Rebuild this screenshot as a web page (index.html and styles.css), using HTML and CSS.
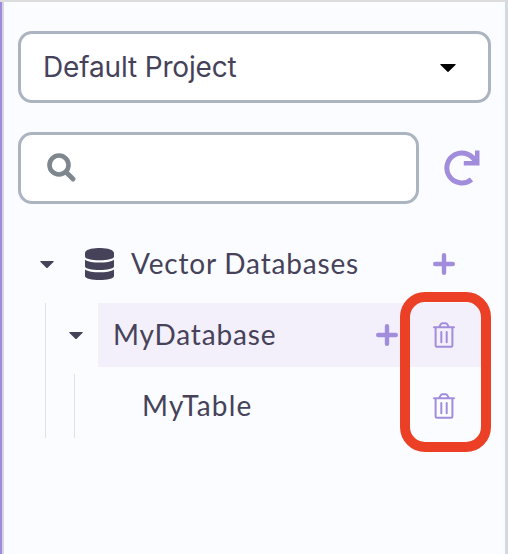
FILE: index.html
```
<!DOCTYPE html>
<html lang="en">
<head>
<meta charset="utf-8">
<title>Projects</title>
<link rel="stylesheet" href="styles.css">
</head>
<body>
<svg width="0" height="0" class="sprite" aria-hidden="true">
  <symbol id="caret" viewBox="0 0 16 8"><path d="M1 0h14q1.4 0 .4 1L8.8 7.6q-.8.8-1.6 0L.6 1Q-.4 0 1 0z"/></symbol>
  <symbol id="plus" viewBox="0 0 22 22"><path d="M11 2.2v17.6M2.2 11h17.6" fill="none" stroke="currentColor" stroke-width="4.4" stroke-linecap="round"/></symbol>
  <symbol id="trash" viewBox="0 0 22 26"><path d="M1 5.3h20M6.2 5L7.6 2.400Q8.200 1.200 9.300 1.200H12.700Q13.800 1.200 14.400 2.400L15.800 5M2.600 5.500V23.500Q2.600 24.700 3.800 24.700H18.200Q19.400 24.700 19.400 23.500V5.500" fill="none" stroke="currentColor" stroke-width="2" stroke-linecap="round"/><path d="M8.300 10v10.200M13.700 10v10.200" fill="none" stroke="currentColor" stroke-width="2" stroke-linecap="round"/></symbol>
</svg>
<main class="panel">
  <div class="select"><span>Default Project</span><svg class="select-caret"><use href="#caret"/></svg></div>
  <div class="search-row">
    <div class="search">
      <svg class="search-icon" viewBox="0 0 29 29"><circle cx="12" cy="12" r="9.500" fill="none" stroke="currentColor" stroke-width="4.600"/><path d="m19.500 19.500 6.500 6.500" stroke="currentColor" stroke-width="4.800" stroke-linecap="round"/></svg>
    </div>
    <svg class="refresh" viewBox="0 0 36 36"><path d="M27.500 29.500A15 15 0 1 1 32 13" fill="none" stroke="currentColor" stroke-width="5"/><path d="M31 .5h4.500v15H19.800v-4.500H31z"/></svg>
  </div>
  <div class="tree">
    <div class="row root">
      <svg class="caret"><use href="#caret"/></svg>
      <svg class="database" viewBox="0 0 29 32"><path d="M0 5C0-1.700 29-1.700 29 5v3.500c0 5-29 5-29 0zM0 11.700c5 3.800 24 3.800 29 0v6.500c0 5-29 5-29 0zM0 21.500c5 3.800 24 3.800 29 0V28c0 5.300-29 5.300-29 0z"/></svg>
      <span class="label root-label">Vector Databases</span>
      <svg class="plus"><use href="#plus"/></svg>
    </div>
    <div class="branch">
      <div class="row">
        <svg class="caret"><use href="#caret"/></svg>
        <div class="item selected">
          <span class="label database-label">MyDatabase</span>
          <svg class="plus"><use href="#plus"/></svg>
          <svg class="trash"><use href="#trash"/></svg>
        </div>
      </div>
      <div class="branch nested">
        <div class="row item">
          <span class="label table-label">MyTable</span>
          <svg class="trash"><use href="#trash"/></svg>
        </div>
      </div>
    </div>
    <div class="highlight"></div>
  </div>
</main>
</body>
</html>
```
FILE: styles.css
```
* { box-sizing: border-box; }
body { margin: 0; background: #fbfcff; color: #464259; }
svg { display: block; flex: none; fill: currentColor; }
.sprite { position: absolute; }
.panel {
  height: 554px;
  padding: 29px 14px 0 18px;
  border-top: 2px solid #dcdcde;
  border-right: 3px solid #d3d9df;
  box-shadow: inset 2px 0 #a08bda, inset 4px 0 #d5d7e2;
}
.select, .search {
  height: 72px;
  display: flex;
  align-items: center;
  border: 3px solid #abb4c0;
  border-radius: 14px;
  background: #fff;
}
.select {
  justify-content: space-between;
  padding: 0 32px 0 22px;
  font: 28px/40px Inter, sans-serif;
  letter-spacing: -.16px;
}
.select-caret { width: 16px; height: 8px; color: #000; margin-top: 2px; }
.search-row { display: flex; align-items: center; margin-top: 29px; }
.search { width: 401px; padding-left: 26px; }
.search-icon { width: 29px; height: 29px; color: #7e878d; margin-bottom: 1px; }
.refresh { width: 36px; height: 36px; margin-left: 25px; color: #a28ddc; }
.tree { position: relative; margin-top: 28px; padding-right: 10px; }
.row { height: 64px; display: flex; align-items: center; }
.root { padding: 0 26px 0 22px; }
.caret { width: 14px; height: 7px; margin-top: 1px; }
.database { width: 29px; height: 32px; margin-left: 31px; }
.label { font: 28px/40px Lato, sans-serif; white-space: nowrap; margin: 0 auto 2px 0; }
.root-label { margin-left: 17px; letter-spacing: .82px; }
.database-label { letter-spacing: .85px; }
.table-label { letter-spacing: 1.2px; }
.plus, .trash { color: #a28ddc; }
.plus { width: 22px; height: 22px; }
.trash { width: 22px; height: 26px; margin-bottom: 1px; }
.branch { margin: 7px 0 0 27px; padding-left: 23px; border-left: 1px solid #e0e1e6; }
.item { flex: 1; height: 64px; display: flex; align-items: center; padding: 0 26px 0 15px; }
.selected { margin-left: 15px; background: #f3f0fb; }
.selected .trash { margin-left: 35px; }
.branch.nested { margin-left: 5px; padding-left: 52px; }
.highlight {
  position: absolute;
  left: 382px;
  top: 60px;
  width: 91px;
  height: 160px;
  border: 10px solid #eb4026;
  border-radius: 25px;
}
```
